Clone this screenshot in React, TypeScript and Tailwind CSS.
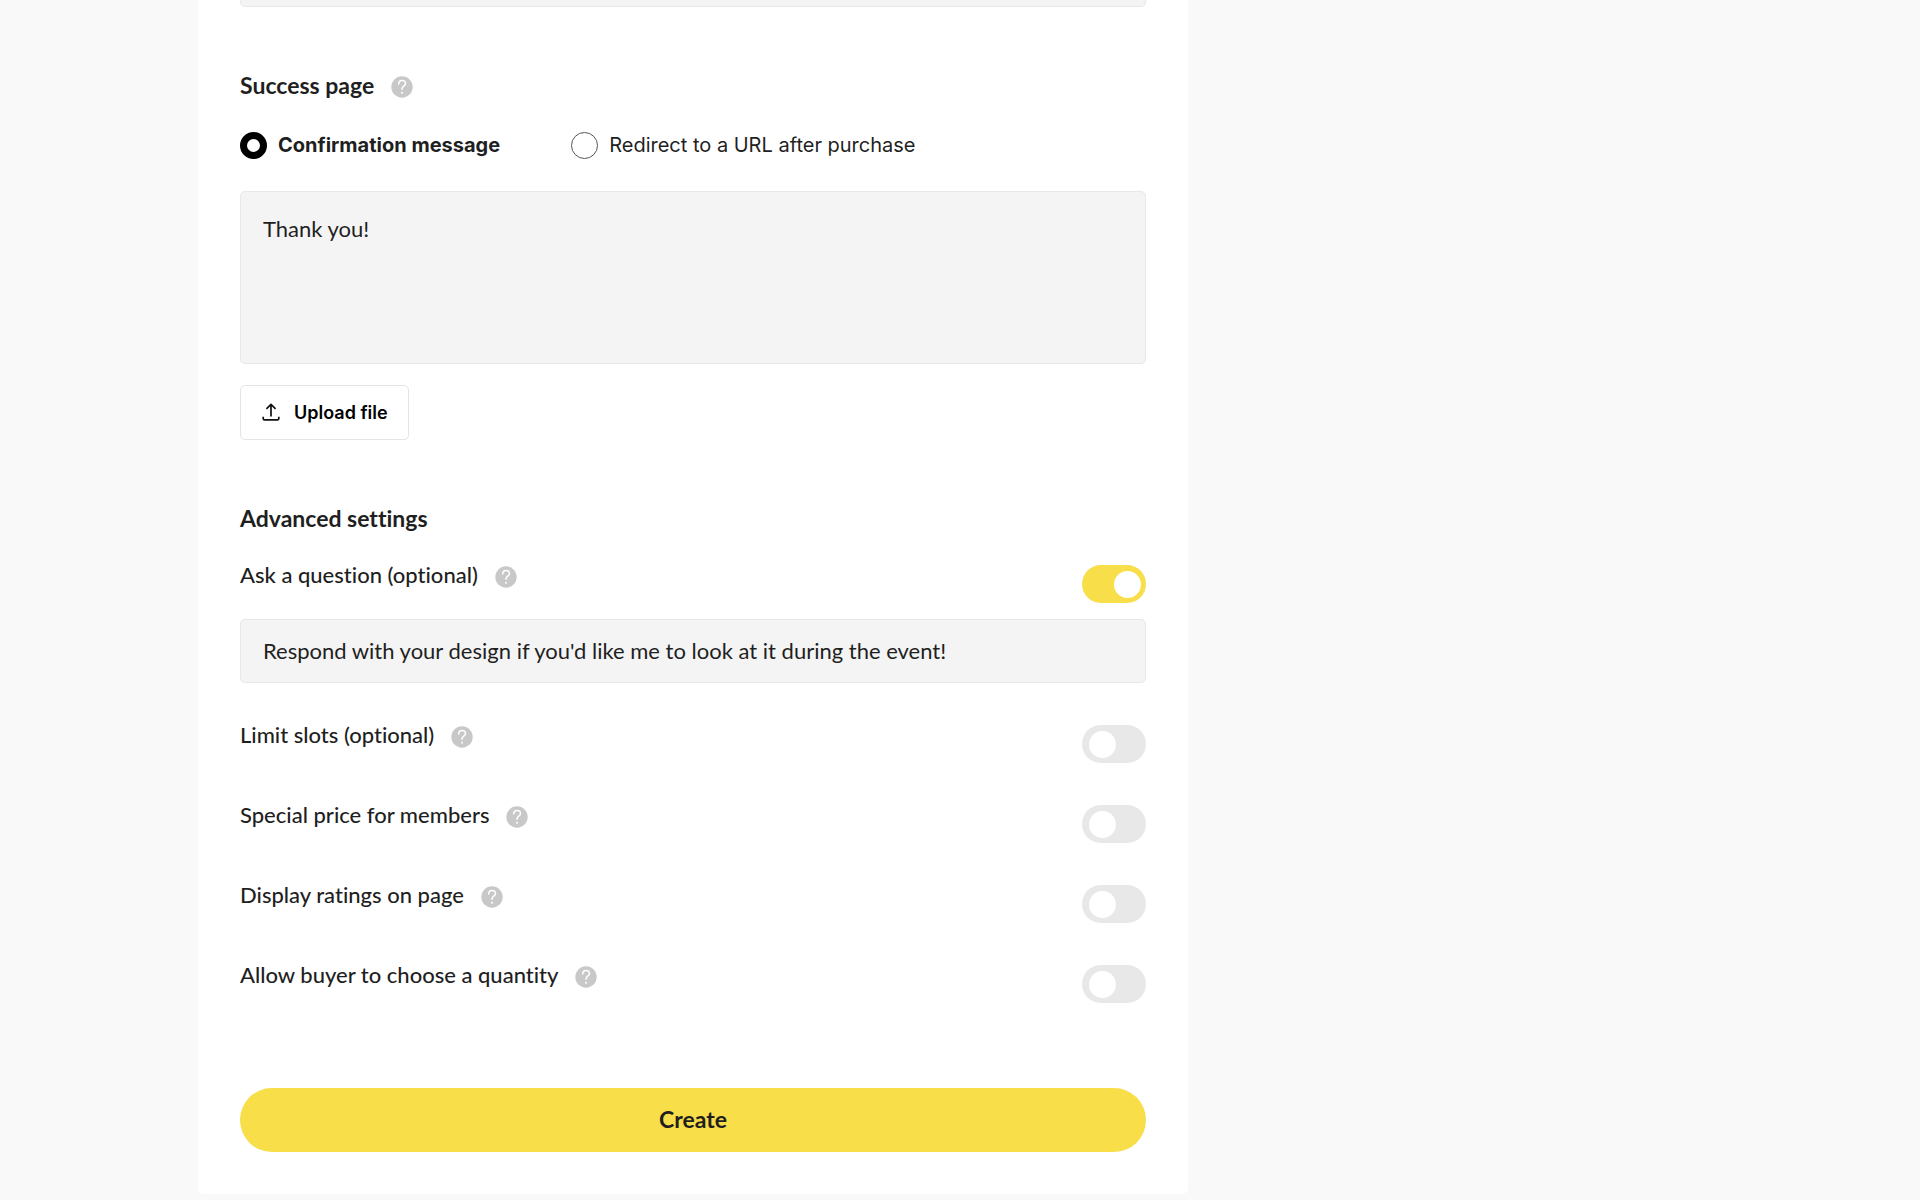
import { useId, useState } from "react";

function HelpButton({ topic }: { topic: string }) {
  return (
    <button type="button" aria-label={`Help: ${topic}`} className="mt-[5px] size-[22px] shrink-0 rounded-full">
      <svg viewBox="0 0 22 22" className="size-full" fill="none" aria-hidden="true">
        <circle cx="11" cy="11" r="10.7" fill="#c8c8c8" />
        <path
          d="M7.7 7.9C7.7 5.7 9.1 4.4 11.1 4.4C13.1 4.4 14.5 5.6 14.5 7.5C14.5 9 13.4 9.7 12.4 10.4C11.5 11.1 11 11.8 11 13.3"
          stroke="#fff"
          strokeWidth="1.5"
          strokeLinecap="round"
        />
        <circle cx="11" cy="16.7" r="1" fill="#fff" />
      </svg>
    </button>
  );
}

function Toggle({ id, initial }: { id: string; initial: boolean }) {
  const [on, setOn] = useState(initial);
  return (
    <input
      id={id}
      type="checkbox"
      role="switch"
      checked={on}
      onChange={(e) => setOn(e.target.checked)}
      className="mt-1 flex h-[38px] w-16 shrink-0 cursor-pointer appearance-none items-center rounded-full bg-[#e8e8e8] pl-[7px] before:block before:size-[27px] before:rounded-full before:bg-white before:content-[''] checked:bg-[#f8de49] checked:pl-8"
    />
  );
}

function SettingRow({ label, initial = false }: { label: string; initial?: boolean }) {
  const id = useId();
  return (
    <div className="flex items-start justify-between">
      <div className="flex items-start gap-[17px]">
        <label htmlFor={id} className="text-[22px] leading-7 font-medium">
          {label}
        </label>
        <HelpButton topic={label} />
      </div>
      <Toggle id={id} initial={initial} />
    </div>
  );
}

function RadioOption({
  label,
  checked,
  onSelect,
}: {
  label: string;
  checked: boolean;
  onSelect: () => void;
}) {
  return (
    <label className="flex cursor-pointer items-center gap-[11px]">
      <input
        type="radio"
        name="success-page"
        checked={checked}
        onChange={onSelect}
        className="size-[27px] shrink-0 cursor-pointer appearance-none rounded-full border border-[#555] bg-white checked:border-[7px] checked:border-black"
      />
      <span className={checked ? "font-bold" : "font-normal"}>{label}</span>
    </label>
  );
}

export default function App() {
  const [mode, setMode] = useState("message");
  return (
    <div className="min-h-screen bg-[#f9f9f9] pb-1.5 font-['Lato',sans-serif] text-[#1f1f1f] [font-variant-ligatures:none] lg:pl-[198px]">
      <form
        onSubmit={(e) => e.preventDefault()}
        className="flex w-full max-w-[990px] flex-col rounded-b-md bg-white px-[42px] pb-[42px]"
      >
        <input
          aria-label="Previous field"
          className="h-[7px] w-full rounded-b-[5px] border border-t-0 border-[#e8e8e8] bg-[#f4f4f4]"
        />

        <div className="mt-16 flex h-[30px] items-start gap-[17px]">
          <h2 className="text-[23px] leading-7 font-bold">Success page</h2>
          <HelpButton topic="Success page" />
        </div>

        <div className="mt-[30px] flex flex-wrap items-center gap-x-[71px] font-['Inter',sans-serif] text-xl leading-[29px]">
          <RadioOption
            label="Confirmation message"
            checked={mode === "message"}
            onSelect={() => setMode("message")}
          />
          <RadioOption
            label="Redirect to a URL after purchase"
            checked={mode === "redirect"}
            onSelect={() => setMode("redirect")}
          />
        </div>

        <textarea
          aria-label="Confirmation message"
          rows={4}
          defaultValue="Thank you!"
          className="mt-[31px] block h-[173px] w-full resize-none rounded-[5px] border border-[#e8e8e8] bg-[#f4f4f4] px-[22px] py-[22px] text-[22px] leading-[30px]"
        />

        <button
          type="button"
          className="mt-[21px] flex h-[55px] items-center gap-3.5 self-start rounded-[5px] border border-[#e4e4e4] bg-white pr-5 pl-[21px] font-['Inter',sans-serif] text-lg font-semibold text-black"
        >
          <svg viewBox="0 0 18 20" className="h-5 w-[18px]" fill="none" stroke="#111" strokeWidth="1.7" aria-hidden="true">
            <path d="M9 13.4V1.6M4.4 5.8L9 1.4L13.6 5.8" />
            <path d="M1.2 13.8V15.4C1.2 16.3 1.7 16.8 2.6 16.8H15.4C16.3 16.8 16.8 16.3 16.8 15.4V13.8" />
          </svg>
          Upload file
        </button>

        <h2 className="mt-16 text-[23px] leading-7 font-bold">Advanced settings</h2>

        <div className="mt-[29px]">
          <SettingRow label="Ask a question (optional)" initial />
          <input
            aria-label="Question"
            defaultValue="Respond with your design if you'd like me to look at it during the event!"
            className="mt-4 block h-16 w-full rounded-[5px] border border-[#e8e8e8] bg-[#f4f4f4] px-[22px] pb-0.5 text-[22px]"
          />
        </div>

        <div className="mt-[38px] flex flex-col gap-[38px]">
          <SettingRow label="Limit slots (optional)" />
          <SettingRow label="Special price for members" />
          <SettingRow label="Display ratings on page" />
          <SettingRow label="Allow buyer to choose a quantity" />
        </div>

        <button
          type="submit"
          className="mt-[85px] h-16 w-full rounded-full bg-[#f8de49] pb-0.5 text-[23px] font-bold"
        >
          Create
        </button>
      </form>
    </div>
  );
}
